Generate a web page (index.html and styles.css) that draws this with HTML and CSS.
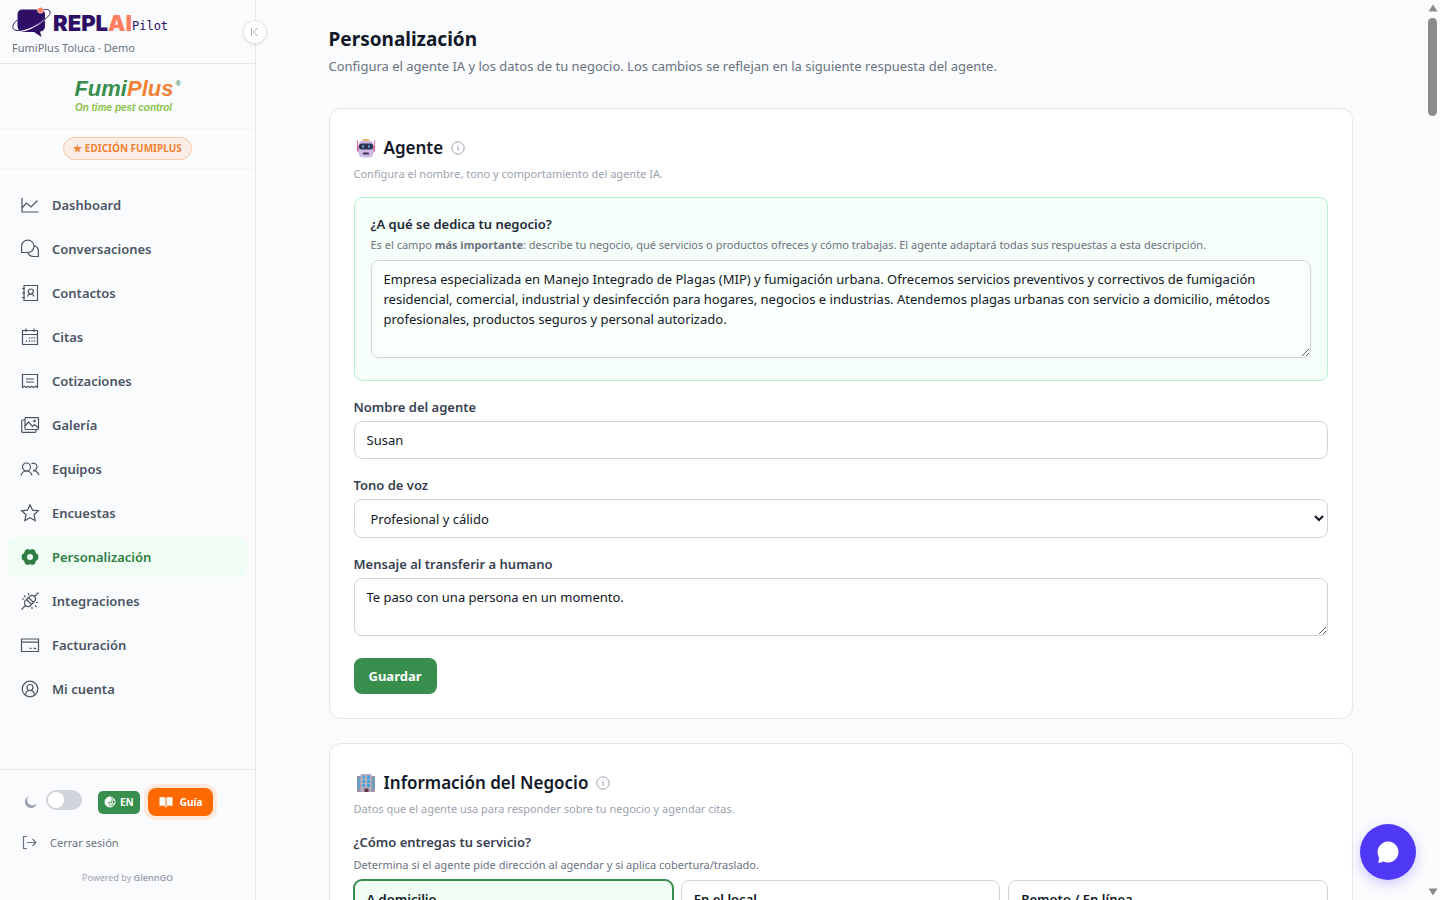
FILE: index.html
```html
<!DOCTYPE html>
<html lang="es">
<head>
    <meta charset="UTF-8">
    <meta name="viewport" content="width=device-width, initial-scale=1.0">
    <title>Personalización - ReplAI Pilot</title>
    <link rel="stylesheet" href="styles.css">
</head>
<body>
    <div class="app">
        <aside class="sidebar">
            <button class="collapse-btn" aria-label="Contraer menú">
                <svg width="12" height="12" viewBox="0 0 12 12"><path d="M2.500 2v8M8.500 2l-4 4 4 4"/></svg>
            </button>

            <div class="sidebar-header">
                <div class="logo">
                    <svg class="logo-mark" width="40" height="32" viewBox="0 0 40 32">
                        <path d="M10 2.500h18q5 0 5 5v11q0 5-4 6l-1 0 1.500 5.500-7.500-5H12q-6 0-6.500-6V8q0-5.500 4.500-5.500z" fill="#2f0f66"/>
                        <path d="M3.500 17C-1 25 8 26 18 21.500 30 16 40 8 38 5" fill="none" stroke="#fafbfd" stroke-width="1.400"/>
                        <path d="M5 13C-3 21 1 25.500 12 22.500 26 18.500 40 9 38 4.500 37 2 33 2 30 3.500" fill="none" stroke="#2f0f66" stroke-width="1"/>
                        <circle cx="28.500" cy="3.200" r="3" fill="#ff7f61" stroke="#fafbfd" stroke-width=".6"/>
                    </svg>
                    <span class="logo-name">REPL<span class="logo-ai">AI</span></span><span class="logo-pilot">Pilot</span>
                </div>
                <p class="account">FumiPlus Toluca · Demo</p>
            </div>

            <div class="brand">
                <div class="brand-name">Fumi<span>Plus</span><sup>®</sup></div>
                <div class="brand-tagline">On time pest control</div>
            </div>

            <div class="edition">
                <span class="edition-badge">★ EDICIÓN FUMIPLUS</span>
            </div>

            <nav class="nav">
                <a href="#dashboard" class="nav-item">
                    <svg class="icon" viewBox="0 0 20 20"><path d="M2 3v14h16.500M2 13l4.500-5 4.500 4 6.500-6.500"/></svg>
                    Dashboard
                </a>
                <a href="#conversaciones" class="nav-item">
                    <svg class="icon" viewBox="0 0 20 20"><path d="M1.600 13.500V8A6.200 6.200 0 1 1 7.800 13.500zM14.200 6.800A5.500 5.500 0 0 1 18.400 12v5.500H13a5.500 5.500 0 0 1-5-3.800"/></svg>
                    Conversaciones
                </a>
                <a href="#contactos" class="nav-item">
                    <svg class="icon" viewBox="0 0 20 20"><path d="M4 2.500h13.500v15H4zM2 5.500h3M2 10h3M2 14.500h3M7.500 13.500c.6-1.800 1.800-2.500 3.300-2.500s2.700.7 3.300 2.500"/><circle cx="10.800" cy="8.500" r="2.500"/></svg>
                    Contactos
                </a>
                <a href="#citas" class="nav-item">
                    <svg class="icon" viewBox="0 0 20 20"><path d="M2.500 3.500h15v14h-15zM2.500 7.500h15M6 1.500v3.500M14 1.500v3.500"/><path class="dots" d="M9.500 11h.1M12 11h.1M14.500 11h.1M6.500 14h.1M9.500 14h.1M12 14h.1M14.500 14h.1"/></svg>
                    Citas
                </a>
                <a href="#cotizaciones" class="nav-item">
                    <svg class="icon" viewBox="0 0 20 20"><path d="M2.500 3.500h15v13l-2-1.200-2 1.200-1.700-1.200-1.800 1.200-1.800-1.200-1.700 1.200-2-1.200-2 1.200zM6 8h8M6 11h8"/></svg>
                    Cotizaciones
                </a>
                <a href="#galeria" class="nav-item">
                    <svg class="icon" viewBox="0 0 20 20"><path d="M5 3.500q0-.8.800-.8h11.900q.8 0 .8.800v10.200q0 .8-.8.800H5.800q-.8 0-.8-.8zM4.800 5H2.500q-.8.200-.8 1v10.500q0 .8.800.8h12.700q.8 0 .8-.8v-2M5 11l3.500-4 4 4.500 2-2 4 3.500"/><circle cx="14.500" cy="6" r=".7"/></svg>
                    Galería
                </a>
                <a href="#equipos" class="nav-item">
                    <svg class="icon" viewBox="0 0 20 20"><circle cx="6.500" cy="8" r="4"/><path d="M1 16.500c.8-3 2.800-4.500 5.500-4.500s4.700 1.500 5.500 4.500M11.500 4.700A3.700 3.700 0 1 1 13 11.600c2.800 0 4.800 1.400 6 4.400"/></svg>
                    Equipos
                </a>
                <a href="#encuestas" class="nav-item">
                    <svg class="icon" viewBox="0 0 20 20"><path d="M10 1.800l2.500 5.300 5.900.7-4.400 4 1.200 5.900L10 14.800l-5.200 2.900L6 11.800l-4.400-4 5.900-.7z"/></svg>
                    Encuestas
                </a>
                <a href="#personalizacion" class="nav-item active" aria-current="page">
                    <svg class="icon" viewBox="0 0 20 20"><path class="fill" fill-rule="evenodd" d="M7 2.300q1.400-.6 2.200.4h1.600q.8-1 2.200-.4l1.500.8q1 .7.900 2l.9 1.400q1.800.3 2 2v3q-.2 1.700-2 2l-.9 1.400q.1 1.300-.9 2l-1.500.8q-1.400.6-2.200-.4H9.200q-.8 1-2.200.4l-1.500-.8q-1-.7-.9-2l-.9-1.400q-1.800-.3-2-2v-3q.2-1.700 2-2l.9-1.400q-.1-1.300.9-2zM10 7a3 3 0 1 0 0 6 3 3 0 0 0 0-6z"/></svg>
                    Personalización
                </a>
                <a href="#integraciones" class="nav-item">
                    <svg class="icon" viewBox="0 0 20 20"><path d="M1.500 18.500L6 14M14 6l4.500-4.500M6.500 8.500l5 5-1 1a3.500 3.500 0 0 1-5-5zM8.500 6.500l1-1a3.500 3.500 0 0 1 5 5l-1 1zM6.500 8.500l2-2M11.500 13.500l2-2M4 4.500l1.500 1.500M2 8h2M8.500 2v2M16 11.500h2M15 14.500l1.500 1.500M12 16v2"/></svg>
                    Integraciones
                </a>
                <a href="#facturacion" class="nav-item">
                    <svg class="icon" viewBox="0 0 20 20"><path d="M1.500 4h17v12.500h-17zM1.500 7.200h17M9.500 13.300h2M13.500 13.300h2.500"/></svg>
                    Facturación
                </a>
                <a href="#cuenta" class="nav-item">
                    <svg class="icon" viewBox="0 0 20 20"><circle cx="10" cy="10" r="7.800"/><circle cx="10" cy="8.500" r="3"/><path d="M5.500 15.500c.5-2.700 2-4 4.500-4s4 1.300 4.500 4"/></svg>
                    Mi cuenta
                </a>
            </nav>

            <div class="sidebar-footer">
                <div class="tools">
                    <svg class="moon" width="12" height="12" viewBox="0 0 12 12"><path d="M3.500.5A6 6 0 1 0 11.700 7.500 5 5 0 0 1 3.500.5z"/></svg>
                    <input type="checkbox" class="switch" aria-label="Modo oscuro">
                    <button class="lang-btn">
                        <svg width="12" height="12" viewBox="0 0 12 12"><circle cx="6" cy="6" r="5"/><path d="M6 1v10M6 4h4.500M6 8h4.500M6 1c3 3 3 7 0 10"/><path class="land" d="M6 1C1 2 0 8 4 10.500L5 8 3 6l3-1z"/></svg>
                        EN
                    </button>
                    <button class="guide-btn">
                        <svg width="14" height="12" viewBox="0 0 14 12"><path d="M.5 1.500q3-1 6 0V10q-3-1-6 0zM7.500 1.500q3-1 6 0V10q-3-1-6 0zM6 10h2l-1 2z"/></svg>
                        Guía
                    </button>
                </div>
                <a href="#salir" class="logout">
                    <svg width="16" height="16" viewBox="0 0 16 16"><path d="M5 1.500H1.500v12H5M5 7.500h9M10.500 4L14 7.500 10.500 11"/></svg>
                    Cerrar sesión
                </a>
                <p class="powered">Powered by <strong>GlennGO</strong></p>
            </div>
        </aside>

        <main class="content">
            <div class="container">
                <header class="page-header">
                    <h1>Personalización</h1>
                    <p>Configura el agente IA y los datos de tu negocio. Los cambios se reflejan en la siguiente respuesta del agente.</p>
                </header>

                <section class="card">
                    <h2>
                        <svg class="emoji" viewBox="0 0 20 20">
                            <path d="M1.500 2v10M18.500 2v10" stroke="#e58bb0" stroke-width="1.200"/>
                            <rect x="1" y="7" width="18" height="7" rx="2" fill="#c45a8c"/>
                            <rect x="6.500" y="1" width="7" height="4" rx="1.500" fill="#f2b04c"/>
                            <path d="M2.500 7.500q0-5 5-5h5q5 0 5 5v7q0 5-5 5h-5q-5 0-5-5z" fill="#cdbbe6"/>
                            <rect x="3" y="5.500" width="14" height="6" rx="2.500" fill="#30304f"/>
                            <path d="M7 7v3M13 7v3" stroke="#5aaef2" stroke-width="1.400"/>
                            <rect x="7" y="14.500" width="6" height="2" rx=".6" fill="#3d3050"/>
                        </svg>
                        Agente
                        <svg class="info" viewBox="0 0 14 14"><circle cx="7" cy="7" r="6.200"/><path d="M6 6.200h1.200V10M6.900 3.700v1"/></svg>
                    </h2>
                    <p class="card-desc">Configura el nombre, tono y comportamiento del agente IA.</p>

                    <div class="highlight">
                        <label for="descripcion">¿A qué se dedica tu negocio?</label>
                        <p class="help">Es el campo <strong>más importante</strong>: describe tu negocio, qué servicios o productos ofreces y cómo trabajas. El agente adaptará todas sus respuestas a esta descripción.</p>
                        <textarea id="descripcion" rows="4">Empresa especializada en Manejo Integrado de Plagas (MIP) y fumigación urbana. Ofrecemos servicios preventivos y correctivos de fumigación residencial, comercial, industrial y desinfección para hogares, negocios e industrias. Atendemos plagas urbanas con servicio a domicilio, métodos profesionales, productos seguros y personal autorizado.</textarea>
                    </div>

                    <div class="field">
                        <label for="nombre">Nombre del agente</label>
                        <input type="text" id="nombre" value="Susan">
                    </div>
                    <div class="field">
                        <label for="tono">Tono de voz</label>
                        <select id="tono">
                            <option selected>Profesional y cálido</option>
                            <option>Formal</option>
                            <option>Casual</option>
                        </select>
                    </div>
                    <div class="field field-last">
                        <label for="mensaje">Mensaje al transferir a humano</label>
                        <textarea id="mensaje" rows="2">Te paso con una persona en un momento.</textarea>
                    </div>
                    <button class="save-btn">Guardar</button>
                </section>

                <section class="card">
                    <h2>
                        <svg class="emoji" viewBox="0 0 20 20">
                            <path d="M1 3h5v16H1zM14 3h5v16h-5z" fill="#9a92a5"/>
                            <path d="M4.500 2q0-1 1-1h9q1 0 1 1v17h-11z" fill="#b9adc0"/>
                            <path d="M2 5h1.500v11H2zM16.800 5h1.200v11h-1.200zM6.500 2.500H9v3.500H6.500zM11 2.500h3v3.500h-3zM6.500 7H9v3H6.500zM11 7h3v3h-3zM6.500 11H9v3H6.500zM11 11h3v3h-3z" fill="#45a5d8"/>
                            <path d="M8.500 15.500h4V19h-4z" fill="#593a4c"/>
                        </svg>
                        Información del Negocio
                        <svg class="info" viewBox="0 0 14 14"><circle cx="7" cy="7" r="6.200"/><path d="M6 6.200h1.200V10M6.900 3.700v1"/></svg>
                    </h2>
                    <p class="card-desc">Datos que el agente usa para responder sobre tu negocio y agendar citas.</p>
                    <h3>¿Cómo entregas tu servicio?</h3>
                    <p class="help">Determina si el agente pide dirección al agendar y si aplica cobertura/traslado.</p>
                    <div class="options">
                        <button class="option selected">A domicilio</button>
                        <button class="option">En el local</button>
                        <button class="option">Remoto / En línea</button>
                    </div>
                </section>
            </div>
        </main>

        <div class="scrollbar" aria-hidden="true">
            <svg width="10" height="8" viewBox="0 0 10 8"><path d="M5 .5L9.500 7.500H.5z"/></svg>
            <div class="scroll-thumb"></div>
            <svg width="10" height="8" viewBox="0 0 10 8"><path d="M5 7.500L9.500.5H.5z"/></svg>
        </div>
    </div>

    <button class="chat-btn" aria-label="Abrir chat">
        <svg width="24" height="24" viewBox="0 0 24 24"><path d="M12 1.500a10.500 10.500 0 1 1-4.500 20q-2.500 1.500-5.500 1 1.500-2.500.8-5.500A10.500 10.500 0 0 1 12 1.500z"/></svg>
    </button>
</body>
</html>
```
FILE: styles.css
```css
:root {
    --bg: #fafbfd;
    --surface: #ffffff;
    --border: #e5e7eb;
    --input-border: #d1d5db;
    --green: #388e4d;
    --green-dark: #2f7d43;
    --green-bg: #f0fdf4;
    --heading: #111827;
    --label: #374151;
    --text: #4b5563;
    --muted: #6b7280;
    --light: #9ca3af;
}

* {
    margin: 0;
    padding: 0;
    box-sizing: border-box;
}

body {
    background-color: var(--bg);
    color: var(--heading);
    font-family: 'Noto Sans', 'Open Sans', sans-serif;
    font-size: 13px;
    line-height: 20px;
}

button, input, select, textarea {
    font: inherit;
    color: inherit;
}

button {
    cursor: pointer;
}

a {
    text-decoration: none;
    color: inherit;
}

svg {
    flex-shrink: 0;
}

.app {
    display: grid;
    grid-template-columns: 256px 1fr 15px;
    height: 100vh;
    overflow: hidden;
}

/* Sidebar */
.sidebar {
    position: relative;
    display: flex;
    flex-direction: column;
    height: 100vh;
    border-right: 1px solid var(--border);
}

.collapse-btn {
    position: absolute;
    top: 20px;
    right: -12px;
    display: flex;
    align-items: center;
    justify-content: center;
    width: 24px;
    height: 24px;
    background-color: var(--surface);
    border: 1px solid var(--border);
    border-radius: 50%;
    box-shadow: 0 1px 3px rgba(0,0,0,0.1);
}

.collapse-btn svg {
    fill: none;
    stroke: var(--light);
}

.sidebar-header {
    padding: 7px 12px;
    border-bottom: 1px solid var(--border);
}

.logo {
    display: flex;
    align-items: center;
    height: 32px;
    color: #2f0f66;
}

.logo-name {
    margin-left: 1px;
    font-family: Inter, sans-serif;
    font-size: 22px;
    font-weight: 900;
}

.logo-ai {
    color: #ff7f61;
}

.logo-pilot {
    padding-top: 6px;
    font-family: 'DejaVu Sans Mono', monospace;
    font-size: 12px;
}

.account {
    font-size: 11px;
    line-height: 17px;
    color: var(--muted);
}

.brand {
    display: flex;
    flex-direction: column;
    align-items: center;
    padding: 12px 0 14px;
    border-bottom: 1px solid #f3f4f6;
    font-family: 'Liberation Sans', Arial, sans-serif;
    font-style: italic;
    font-weight: bold;
}

.brand-name {
    display: flex;
    font-size: 22px;
    line-height: 26px;
    color: var(--green);
}

.brand-name span {
    color: #f08236;
}

.brand-name sup {
    margin-left: 2px;
    font-size: 7px;
    line-height: 16px;
}

.brand-tagline {
    padding-right: 8px;
    font-size: 10px;
    line-height: 12px;
    color: #8bc34a;
}

.edition {
    display: flex;
    justify-content: center;
    padding: 8px 0;
    border-bottom: 1px solid #f3f4f6;
}

.edition-badge {
    padding: 3px 9px;
    background-color: #faede6;
    border: 1px solid #f9c8a6;
    border-radius: 12px;
    font-size: 10px;
    font-weight: 700;
    line-height: 15px;
    color: #f08236;
}

.nav {
    display: flex;
    flex: 1;
    flex-direction: column;
    gap: 4px;
    padding: 16px 8px;
}

.nav-item {
    display: flex;
    align-items: center;
    gap: 12px;
    height: 40px;
    padding: 0 12px;
    border-radius: 8px;
    font-weight: 600;
    color: var(--text);
}

.nav-item.active {
    background-color: var(--green-bg);
    color: var(--green-dark);
}

.icon {
    width: 20px;
    height: 20px;
    fill: none;
    stroke: currentColor;
    stroke-width: 1.2;
}

.icon .dots {
    stroke-width: 1.5;
    stroke-linecap: round;
}

.icon .fill {
    fill: currentColor;
    stroke: none;
}

.sidebar-footer {
    padding: 18px 12px 14px;
    border-top: 1px solid var(--border);
}

.tools {
    display: flex;
    align-items: center;
    padding-left: 13px;
}

.moon {
    fill: var(--light);
}

.switch {
    appearance: none;
    width: 36px;
    height: 20px;
    margin: 0 16px 4px 9px;
    padding: 2px;
    background-color: var(--input-border);
    border-radius: 10px;
}

.switch::before {
    content: '';
    display: block;
    width: 16px;
    height: 16px;
    background-color: var(--surface);
    border-radius: 50%;
}

.lang-btn, .guide-btn {
    display: flex;
    align-items: center;
    border: none;
    color: #ffffff;
    font-size: 10px;
    font-weight: 700;
}

.lang-btn {
    gap: 4px;
    height: 23px;
    margin-right: 8px;
    padding: 0 6px;
    background-color: var(--green);
    border-radius: 5px;
}

.lang-btn svg {
    fill: none;
    stroke: #ffffff;
}

.lang-btn .land {
    fill: #ffffff;
}

.guide-btn {
    gap: 7px;
    height: 28px;
    padding: 0 11px;
    background-color: #ff6a00;
    border-radius: 8px;
    box-shadow: 0 0 0 4px #ffe9db;
}

.guide-btn svg {
    fill: #ffffff;
}

.logout {
    display: flex;
    align-items: center;
    gap: 12px;
    margin-top: 17px;
    padding-left: 10px;
    font-size: 11px;
    color: var(--muted);
}

.logout svg {
    fill: none;
    stroke: currentColor;
    stroke-width: 1.2;
}

.powered {
    margin-top: 17px;
    font-size: 9px;
    line-height: 16px;
    text-align: center;
    color: var(--light);
}

.powered strong {
    font-weight: 600;
}

/* Content */
.content {
    height: 100vh;
    overflow: hidden;
    padding: 24px;
}

.container {
    display: flex;
    flex-direction: column;
    gap: 24px;
    max-width: 1024px;
    margin: 0 auto;
}

.page-header {
    padding-bottom: 7px;
}

h1 {
    font-size: 19px;
    font-weight: 700;
    line-height: 31px;
}

.page-header p {
    line-height: 22px;
    color: var(--muted);
}

.card {
    padding: 25px 24px 24px;
    background-color: var(--surface);
    border: 1px solid var(--border);
    border-radius: 12px;
}

h2 {
    display: flex;
    align-items: center;
    gap: 8px;
    padding-left: 2px;
    font-size: 17px;
    font-weight: 600;
    line-height: 28px;
}

.emoji {
    width: 20px;
    height: 20px;
}

.info {
    width: 14px;
    height: 14px;
    fill: none;
    stroke: var(--light);
}

.card-desc {
    margin: 4px 0 15px;
    font-size: 11px;
    line-height: 16px;
    color: var(--light);
}

.highlight {
    margin-bottom: 16px;
    padding: 16px 16px 22px;
    background-color: #f6fefa;
    border: 1px solid #bbf0cf;
    border-radius: 8px;
}

.highlight label {
    color: #1f2937;
}

.help {
    margin: 3px 0 7px;
    font-size: 11px;
    line-height: 16px;
    color: var(--muted);
}

.field {
    margin-bottom: 16px;
}

.field-last {
    margin-bottom: 22px;
}

label, h3 {
    display: block;
    font-size: 13px;
    font-weight: 600;
    line-height: 20px;
    color: var(--label);
}

h3 {
    margin-bottom: 5px;
}

.field label {
    margin-bottom: 4px;
}

input[type="text"], select, textarea {
    display: block;
    width: 100%;
    padding: 8px 12px;
    background-color: var(--surface);
    border: 1px solid var(--input-border);
    border-radius: 8px;
}

textarea {
    resize: vertical;
}

.highlight textarea {
    background-color: #fafffc;
}

select {
    height: 39px;
}

.save-btn {
    height: 36px;
    padding: 0 15px;
    background-color: var(--green);
    border: none;
    border-radius: 8px;
    color: #ffffff;
    font-weight: 700;
}

.options {
    display: grid;
    grid-template-columns: repeat(3, 1fr);
    gap: 8px;
}

.option {
    padding: 8px 12px;
    background-color: var(--surface);
    border: 1px solid var(--input-border);
    border-radius: 8px;
    font-weight: 600;
    text-align: left;
}

.option.selected {
    background-color: var(--green-bg);
    border-color: var(--green);
    box-shadow: 0 0 0 1px var(--green);
}

/* Page scroll indicator */
.scrollbar {
    display: flex;
    flex-direction: column;
    align-items: center;
    gap: 6px;
    height: 100vh;
    padding: 4px 0;
    background-color: #fcfcfd;
}

.scrollbar svg {
    fill: #8b8b8b;
}

.scroll-thumb {
    width: 9px;
    height: 11%;
    margin-bottom: auto;
    background-color: #8b8b8b;
    border-radius: 5px;
}

.chat-btn {
    position: fixed;
    right: 24px;
    bottom: 20px;
    display: flex;
    align-items: center;
    justify-content: center;
    width: 56px;
    height: 56px;
    background-color: #4f39f6;
    border: none;
    border-radius: 50%;
    box-shadow: 0 4px 12px rgba(79,57,246,0.25);
}

.chat-btn svg {
    fill: #ffffff;
}
```
